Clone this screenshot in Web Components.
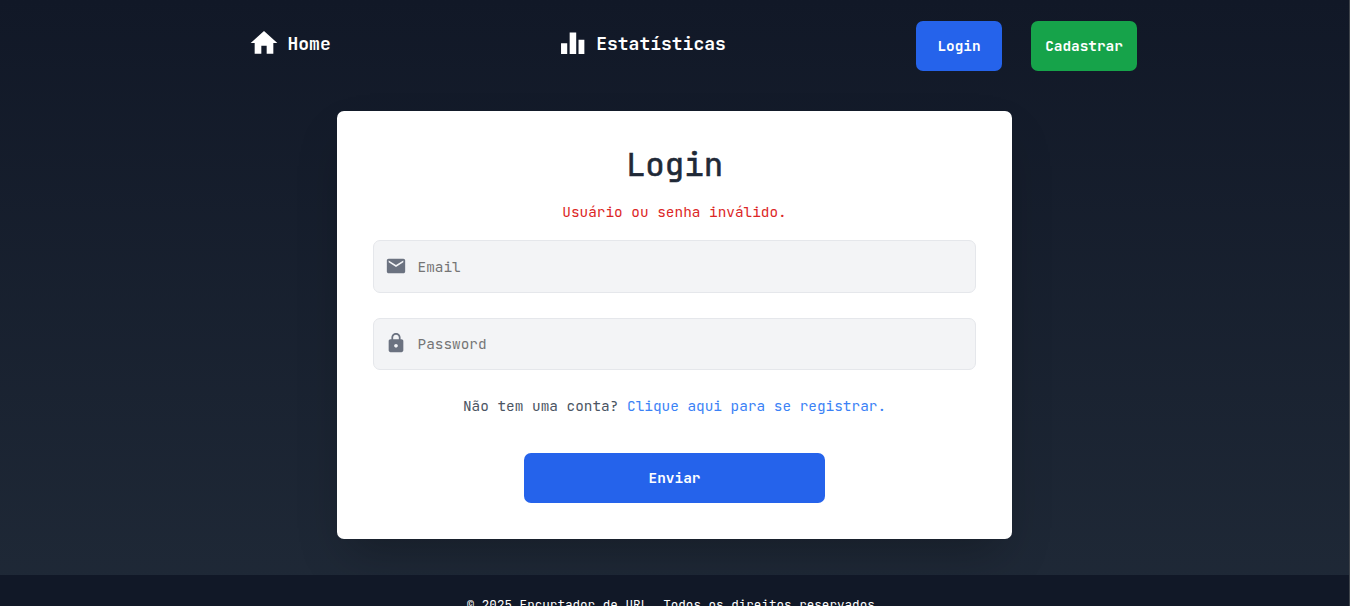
<!DOCTYPE html>
<html lang="pt-BR">
<head>
<meta charset="utf-8">
<title>Encurtador de URL</title>
<style>
html{background:#fff;overflow:hidden}
body{margin:0;font-family:"JetBrains Mono","DejaVu Sans Mono","Liberation Mono",monospace;font-size:14.4px}
</style>
</head>
<body>
<app-page>
  <site-nav slot="header">
    <nav-item icon="home" style="--size:32px;--gap:7.5px">Home</nav-item>
    <nav-item icon="stats" style="--size:28px;--gap:10px;--drop:2px">Estatísticas</nav-item>
    <app-button slot="actions" style="--w:86px">Login</app-button>
    <app-button slot="actions" style="--w:106px;--bg:#16a34a">Cadastrar</app-button>
  </site-nav>
  <login-card heading="Login">
    <span slot="error">Usuário ou senha inválido.</span>
    <form-field icon="mail" type="email" label="Email" style="--h:51px"></form-field>
    <form-field icon="lock" type="password" label="Password" style="--h:50px"></form-field>
    <span slot="hint">Não tem uma conta?</span>
    <span slot="link">Clique aqui para se registrar.</span>
    <app-button slot="submit" style="--w:301px">Enviar</app-button>
  </login-card>
  <site-footer slot="footer">© 2025 Encurtador de URL. Todos os direitos reservados.</site-footer>
</app-page>
<script>
const icons = {
  home: '<path d="M10 20v-6h4v6h5v-8h3L12 3 2 12h3v8z"/>',
  stats: '<path d="M2.6 11.4h5.3v9.1H2.6zM10 2.2h5.6v18.3H10zM17.6 8.4h5v12.1h-5z"/>',
  mail: '<path d="M20 4H4c-1.1 0-2 .9-2 2v12c0 1.1.9 2 2 2h16c1.1 0 2-.9 2-2V6c0-1.1-.9-2-2-2zm0 4-8 5-8-5V6l8 5 8-5z"/>',
  lock: '<path d="M18 8h-1V6c0-2.76-2.24-5-5-5S7 3.24 7 6v2H6c-1.1 0-2 .9-2 2v10c0 1.1.9 2 2 2h12c1.1 0 2-.9 2-2V10c0-1.1-.9-2-2-2zm-6 9c-1.1 0-2-.9-2-2s.9-2 2-2 2 .9 2 2-.9 2-2 2zm3.1-9H8.9V6c0-1.71 1.39-3.1 3.1-3.1s3.1 1.39 3.1 3.1z"/>'
};
const svg = n => `<svg viewBox="0 0 24 24" fill="currentColor" aria-hidden="true">${icons[n]}</svg>`;
const define = (name, render) => customElements.define(name, class extends HTMLElement {
  connectedCallback() {
    if (!this.shadowRoot) this.attachShadow({ mode: 'open' }).innerHTML = render(this);
  }
});

define('app-page', () => `<style>
:host{display:flex;flex-direction:column;box-sizing:border-box;height:606px;overflow:hidden;
 border-right:1px solid #3f444b;background:linear-gradient(#111827,#1f2937 606px)}
main{height:464px;display:flex;justify-content:center;align-items:flex-start}
</style><slot name="header"></slot><main><slot></slot></main><slot name="footer"></slot>`);

define('site-nav', () => `<style>
:host{display:flex;height:111px;box-sizing:border-box;padding:21px 212px 0 248px;align-items:flex-start;justify-content:space-between}
nav{display:flex;gap:227.5px;padding-top:6px}
.actions{display:flex;gap:29px}
</style><nav><slot></slot></nav><div class="actions"><slot name="actions"></slot></div>`);

define('nav-item', el => `<style>
:host{display:flex;align-items:center;height:32px;color:#fff;font-size:18px;font-weight:700;white-space:nowrap}
svg{width:var(--size);height:var(--size);flex:none;margin-right:var(--gap);margin-top:var(--drop,0)}
</style>${svg(el.getAttribute('icon'))}<slot></slot>`);

define('app-button', () => `<style>
:host{display:block;width:var(--w)}
button{display:block;width:100%;height:50px;padding:0;border:0;border-radius:7px;background:var(--bg,#2563eb);
 color:#fff;font:700 14.4px/50px "JetBrains Mono","DejaVu Sans Mono",monospace}
</style><button type="button"><slot></slot></button>`);

define('login-card', el => `<style>
:host{display:flex;flex-direction:column;box-sizing:border-box;width:675px;height:428px;padding:36px;
 border-radius:7px;background:#fff;box-shadow:0 22px 45px -11px rgba(0,0,0,.25);text-align:center}
h1{margin:0;font-size:32.4px;line-height:36px;font-weight:400;color:#1f2937;-webkit-text-stroke:.6px #1f2937}
.error{margin-top:18px;line-height:22px;color:#dc2626}
.fields{display:flex;flex-direction:column;gap:25px;margin-top:17px}
.hint{margin-top:25px;line-height:22px;color:#4b5563}
.link{color:#3b82f6}
.submit{display:flex;justify-content:center;margin-top:36px}
</style><h1>${el.getAttribute('heading')}</h1>
<div class="error"><slot name="error"></slot></div>
<div class="fields"><slot></slot></div>
<div class="hint"><slot name="hint"></slot> <span class="link"><slot name="link"></slot></span></div>
<div class="submit"><slot name="submit"></slot></div>`);

define('form-field', el => `<style>
:host{display:flex;align-items:center;box-sizing:content-box;height:var(--h);padding:0 11px;
 border:1px solid #e5e7eb;border-radius:7px;background:#f3f4f6;color:#6b7280}
svg{width:22px;height:22px;flex:none;margin:0 10.5px 2px 0}
input{flex:1;min-width:0;height:22px;padding:0;border:0;outline:0;background:none;
 font:14.4px/22px "JetBrains Mono","DejaVu Sans Mono",monospace;color:inherit}
input::placeholder{color:#757575;opacity:1}
</style>${svg(el.getAttribute('icon'))}<input type="${el.getAttribute('type')}" placeholder="${el.getAttribute('label')}">`);

define('site-footer', () => `<style>
:host{display:block;height:31px;padding-top:21px;box-sizing:border-box;background:#111827;color:#fff;
 font-size:12.6px;line-height:18px;text-align:center;overflow:hidden}
</style><slot></slot>`);
</script>
</body>
</html>
